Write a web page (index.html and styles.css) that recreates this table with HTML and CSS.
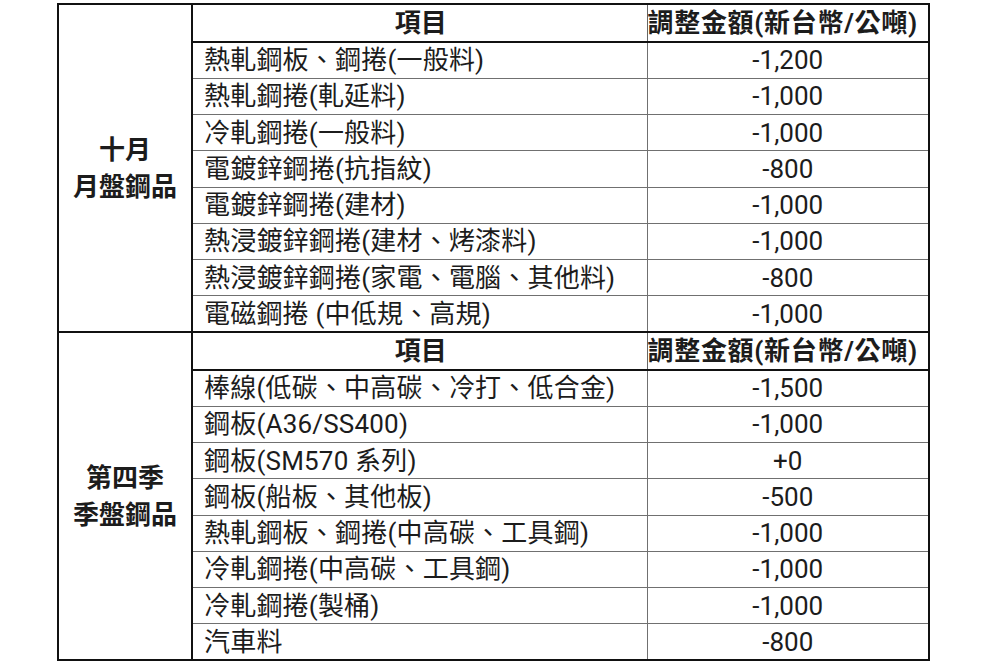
FILE: index.html
```html
<!DOCTYPE html>
<html lang="zh-Hant">
<head>
<meta charset="utf-8">
<title>鋼品價格調整</title>
<link rel="stylesheet" href="styles.css">
</head>
<body>
<table class="price-table">
  <colgroup>
    <col class="c-group">
    <col class="c-item">
    <col class="c-val">
  </colgroup>
  <tbody>
    <tr class="head">
      <th rowspan="9" class="group">十月<br>月盤鋼品</th>
      <th class="item-h">項目</th>
      <th class="val-h">調整金額(新台幣/公噸)</th>
    </tr>
    <tr class="row"><td class="item">熱軋鋼板、鋼捲(一般料)</td><td class="val">-1,200</td></tr>
    <tr class="row"><td class="item">熱軋鋼捲(軋延料)</td><td class="val">-1,000</td></tr>
    <tr class="row"><td class="item">冷軋鋼捲(一般料)</td><td class="val">-1,000</td></tr>
    <tr class="row"><td class="item">電鍍鋅鋼捲(抗指紋)</td><td class="val">-800</td></tr>
    <tr class="row"><td class="item">電鍍鋅鋼捲(建材)</td><td class="val">-1,000</td></tr>
    <tr class="row"><td class="item">熱浸鍍鋅鋼捲(建材、烤漆料)</td><td class="val">-1,000</td></tr>
    <tr class="row"><td class="item">熱浸鍍鋅鋼捲(家電、電腦、其他料)</td><td class="val">-800</td></tr>
    <tr class="row"><td class="item">電磁鋼捲 (中低規、高規)</td><td class="val">-1,000</td></tr>
    <tr class="head">
      <th rowspan="9" class="group">第四季<br>季盤鋼品</th>
      <th class="item-h">項目</th>
      <th class="val-h">調整金額(新台幣/公噸)</th>
    </tr>
    <tr class="row"><td class="item">棒線(低碳、中高碳、冷打、低合金)</td><td class="val">-1,500</td></tr>
    <tr class="row"><td class="item">鋼板(A36/SS400)</td><td class="val">-1,000</td></tr>
    <tr class="row"><td class="item">鋼板(SM570 系列)</td><td class="val">+0</td></tr>
    <tr class="row"><td class="item">鋼板(船板、其他板)</td><td class="val">-500</td></tr>
    <tr class="row"><td class="item">熱軋鋼板、鋼捲(中高碳、工具鋼)</td><td class="val">-1,000</td></tr>
    <tr class="row"><td class="item">冷軋鋼捲(中高碳、工具鋼)</td><td class="val">-1,000</td></tr>
    <tr class="row"><td class="item">冷軋鋼捲(製桶)</td><td class="val">-1,000</td></tr>
    <tr class="row"><td class="item">汽車料</td><td class="val">-800</td></tr>
  </tbody>
</table>
</body>
</html>
```

FILE: styles.css
```css
html, body {
  margin: 0;
  padding: 0;
  background: #ffffff;
}

body {
  font-family: Roboto, "Noto Sans CJK TC", sans-serif;
  color: #1c1c1c;
}

.price-table {
  border-collapse: collapse;
  table-layout: fixed;
  width: 871px;
  margin: 3px 0 0 57px;
  border: 2px solid #111;
  font-size: 26px;
}

.c-group { width: 134px; }
.c-item { width: 455px; }
.c-val { width: 282px; }

.price-table th,
.price-table td {
  padding: 0;
  line-height: 1;
}

.price-table .head {
  height: 38px;
}

.price-table .row {
  height: 36.25px;
}

.price-table .group {
  border: 2px solid #111;
  font-weight: 700;
  line-height: 37px;
  text-align: center;
  vertical-align: middle;
  padding-top: 2px;
}

.price-table .item-h,
.price-table .val-h {
  font-weight: 700;
  text-align: center;
  border-top: 2px solid #111;
  border-bottom: 2px solid #111;
}

.price-table .item-h {
  padding-left: 2px;
}

.price-table .val-h {
  border-left: 1px solid #666;
  border-right: 2px solid #111;
  letter-spacing: 0.7px;
  padding-right: 12px;
  white-space: nowrap;
}

.price-table .item {
  text-align: left;
  padding-left: 11px;
  border: 1px solid #707070;
  white-space: nowrap;
  letter-spacing: 0.2px;
}

.price-table .val {
  text-align: center;
  border: 1px solid #707070;
  border-right: 2px solid #111;
}
```
